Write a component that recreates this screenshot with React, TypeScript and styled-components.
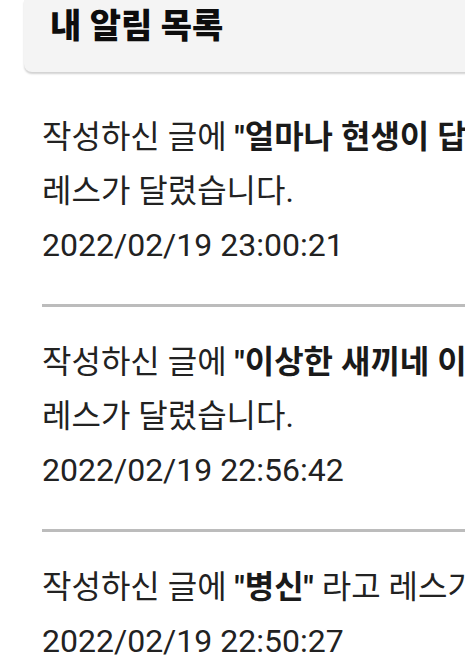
import React from 'react'
import styled, { createGlobalStyle } from 'styled-components'

interface NotificationItem {
  id: number
  comment: string
  suffix: string
  createdAt: string
}

const GlobalStyle = createGlobalStyle`
  html, body {
    margin: 0;
    padding: 0;
    background: #ffffff;
    overflow: hidden;
  }
  body {
    font-family: Roboto, "Noto Sans CJK KR", "Noto Sans", sans-serif;
    color: #222222;
  }
`

const Page = styled.div`
  width: 760px;
  padding-left: 24px;
`

const Header = styled.div`
  height: 72px;
  display: flex;
  align-items: center;
  padding: 0 0 0 26px;
  margin-bottom: 10px;
  background: #f4f4f4;
  border-bottom-left-radius: 8px;
  box-shadow: 0 2px 2px rgba(0, 0, 0, 0.18);
  .title {
    font-size: 34px;
    font-weight: 900;
    color: #0d0d0d;
    margin-top: -26px;
  }
`

const List = styled.ul`
  list-style: none;
  margin: 0 0 0 18px;
  padding: 0;
`

const Item = styled.li`
  padding: 28px 0 32px;
  border-bottom: 3px solid #bcbcbc;
  font-size: 32px;
  line-height: 54px;
  word-break: keep-all;
  .message {
    margin: 0;
    width: 700px;
    b {
      font-weight: 700;
      color: #1a1a1a;
    }
  }
  .date {
    margin: 0;
  }
`

const notifications: NotificationItem[] = [
  {
    id: 1,
    comment: '얼마나 현생이 답이 없으면',
    suffix: '라고 레스가 달렸습니다.',
    createdAt: '2022/02/19 23:00:21',
  },
  {
    id: 2,
    comment: '이상한 새끼네 이거 진짜로',
    suffix: '라고 레스가 달렸습니다.',
    createdAt: '2022/02/19 22:56:42',
  },
  {
    id: 3,
    comment: '병신',
    suffix: '라고 레스가 달렸습니다.',
    createdAt: '2022/02/19 22:50:27',
  },
]

const App = () => {
  return (
    <Page>
      <GlobalStyle />
      <Header>
        <div className="title">내 알림 목록</div>
      </Header>
      <List>
        {notifications.map((item) => (
          <Item key={item.id}>
            <p className="message">
              작성하신 글에 <b>"{item.comment}"</b> {item.suffix}
            </p>
            <p className="date">{item.createdAt}</p>
          </Item>
        ))}
      </List>
    </Page>
  )
}

export default App
